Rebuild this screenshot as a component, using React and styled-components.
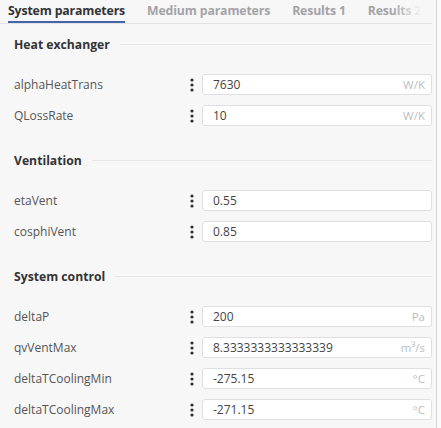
import React from "react";
import styled, { createGlobalStyle } from "styled-components";

const GlobalStyle = createGlobalStyle`
  html, body {
    margin: 0;
    padding: 0;
    background: #fbfbfc;
  }
  body {
    font-family: "Open Sans", "Noto Sans", sans-serif;
  }
`;

const sections = [
  {
    title: "Heat exchanger",
    rows: [
      { name: "alphaHeatTrans", value: "7630", unit: "W/K" },
      { name: "QLossRate", value: "10", unit: "W/K" },
    ],
  },
  {
    title: "Ventilation",
    rows: [
      { name: "etaVent", value: "0.55" },
      { name: "cosphiVent", value: "0.85" },
    ],
  },
  {
    title: "System control",
    rows: [
      { name: "deltaP", value: "200", unit: "Pa" },
      { name: "qvVentMax", value: "8.3333333333333339", unit: "m³/s" },
      { name: "deltaTCoolingMin", value: "-275.15", unit: "°C" },
      { name: "deltaTCoolingMax", value: "-271.15", unit: "°C" },
    ],
  },
];

const tabs = ["System parameters", "Medium parameters", "Results 1", "Results 2"];

const DotsIcon = () => (
  <svg width="4" height="14" viewBox="0 0 4 14">
    <circle cx="2" cy="2" r="1.6" fill="#2f2f2f" />
    <circle cx="2" cy="7" r="1.6" fill="#2f2f2f" />
    <circle cx="2" cy="12" r="1.6" fill="#2f2f2f" />
  </svg>
);

export default function App() {
  return (
    <>
      <GlobalStyle />
      <Panel>
        <TabBar>
          {tabs.map((t, i) => (
            <Tab key={t} $active={i === 0}>
              {t}
            </Tab>
          ))}
        </TabBar>
        <Content>
          {sections.map((s) => (
            <Section key={s.title}>
              <SectionTitle>{s.title}</SectionTitle>
              <Rows>
                {s.rows.map((r) => (
                  <Row key={r.name}>
                    <Label>{r.name}</Label>
                    <MenuButton>
                      <DotsIcon />
                    </MenuButton>
                    <Field>
                      <Value>{r.value}</Value>
                      {r.unit && <Unit>{r.unit}</Unit>}
                    </Field>
                  </Row>
                ))}
              </Rows>
            </Section>
          ))}
        </Content>
      </Panel>
    </>
  );
}

const Panel = styled.div`
  width: 432px;
  height: 428px;
  padding-right: 4px;
  background: #f7f7f8;
  border-right: 1px solid #d4d4d6;
  overflow: hidden;
`;

const TabBar = styled.div`
  position: relative;
  display: flex;
  gap: 22px;
  height: 23px;
  padding-left: 8px;
  border-bottom: 1px solid #e3e3e6;
  overflow: hidden;

  &::after {
    content: "";
    position: absolute;
    top: 0;
    right: 0;
    width: 40px;
    height: 22px;
    background: linear-gradient(to right, rgba(247, 247, 248, 0), #f7f7f8 75%);
  }
`;

const Tab = styled.div`
  flex-shrink: 0;
  font-size: 12.3px;
  font-weight: 700;
  line-height: 21px;
  color: ${(p) => (p.$active ? "#333" : "#a3a3a6")};
  border-bottom: 2px solid ${(p) => (p.$active ? "#4466a8" : "transparent")};
  letter-spacing: -0.15px;
`;

const Content = styled.div`
  padding: 10px 0 0 14px;
`;

const Section = styled.div`
  margin-bottom: 24px;
`;

const SectionTitle = styled.div`
  display: flex;
  align-items: center;
  height: 20px;
  margin-bottom: 20px;
  font-size: 12.2px;
  font-weight: 700;
  color: #333;

  &::after {
    content: "";
    flex: 1;
    height: 1px;
    margin-left: 10px;
    background: #e6e6e9;
  }
`;

const Rows = styled.div`
  display: flex;
  flex-direction: column;
  gap: 10px;
`;

const Row = styled.div`
  display: grid;
  grid-template-columns: 1fr 12px 230px;
  align-items: center;
  height: 21px;
`;

const Label = styled.div`
  font-size: 12px;
  color: #555;
`;

const MenuButton = styled.div`
  display: flex;
  align-items: center;
  height: 21px;
`;

const Field = styled.div`
  display: flex;
  align-items: center;
  justify-content: space-between;
  box-sizing: border-box;
  height: 21px;
  padding: 0 6px 0 10px;
  background: #fff;
  border: 1px solid #dfdfe2;
  border-radius: 3px;
`;

const Value = styled.span`
  font-size: 12px;
  color: #444;
`;

const Unit = styled.span`
  font-size: 11.5px;
  color: #bdbdc0;
`;
